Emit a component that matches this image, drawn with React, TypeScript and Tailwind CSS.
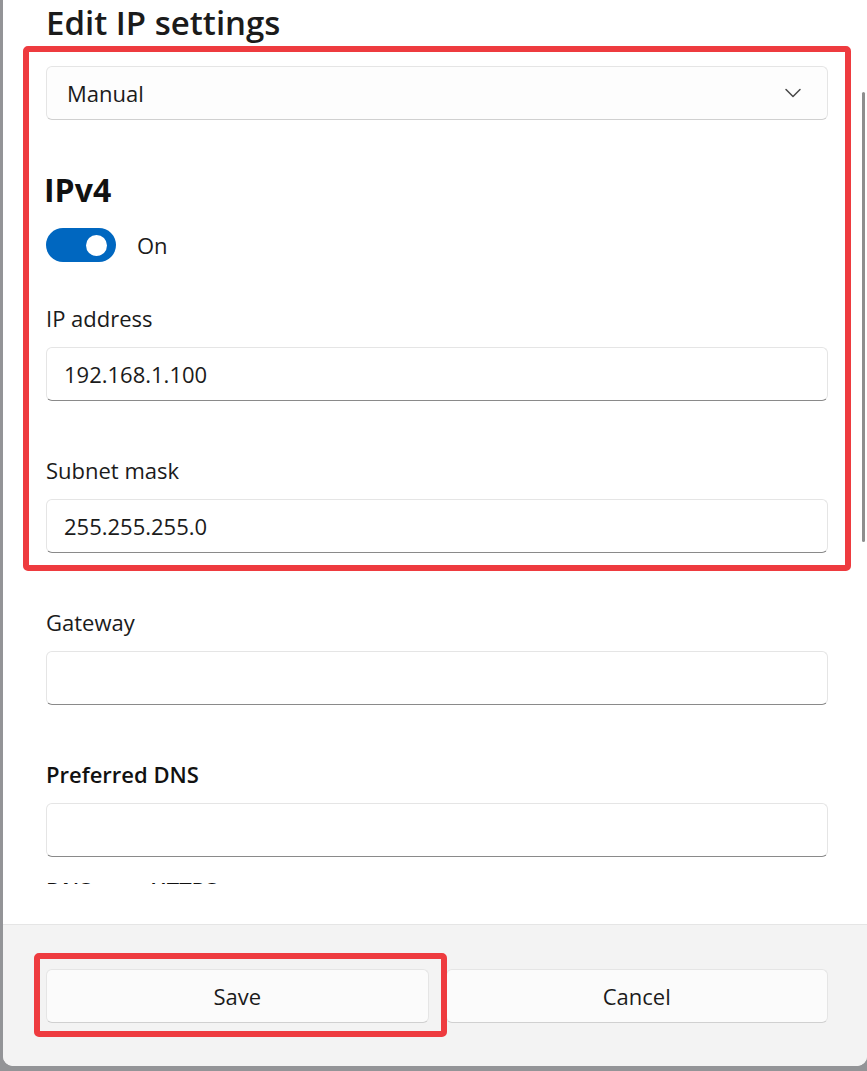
import { ChevronDown } from 'lucide-react';

const font = { fontFamily: '"Open Sans", "Noto Sans", sans-serif' };

function Field({ label, value, strong }: { label: string; value?: string; strong?: boolean }) {
  return (
    <div className="flex flex-col">
      <div className={`text-[22px] leading-[28px] ${strong ? 'font-semibold text-[#111]' : 'text-[#1b1b1b]'}`}>{label}</div>
      <div className="mt-[15px] h-[54px] rounded-[6px] border border-[#e5e5e5] border-b-[#8a8a8a] bg-white px-[17px] flex items-center text-[22px] text-[#1b1b1b]">
        {value}
      </div>
    </div>
  );
}

export default function App() {
  return (
    <div className="relative w-[867px] h-[1071px] bg-[#939497] pl-[3px] pb-[5px] overflow-hidden" style={font}>
      <div className="w-full h-full bg-white rounded-b-[10px] overflow-hidden flex flex-col">
        {/* scrolling content */}
        <div className="h-[884px] overflow-hidden pl-[43px] pr-[39px] pt-[3px]">
          <h1 className="text-[33px] leading-[40px] font-semibold text-[#1b1b1b]">Edit IP settings</h1>

          <div className="mt-[23px] h-[54px] rounded-[6px] border border-[#e5e5e5] border-b-[#d0d0d0] bg-[#fdfdfd] pl-[20px] pr-[20px] flex items-center justify-between text-[22px] text-[#1b1b1b]">
            <span>Manual</span>
            <ChevronDown className="w-[28px] h-[28px] text-[#4a4a4a]" strokeWidth={1.3} />
          </div>

          <h2 className="mt-[50px] text-[32px] leading-[40px] font-bold text-[#111] -ml-[2px]">IPv4</h2>

          <div className="mt-[18px] flex items-center gap-[21px]">
            <div className="w-[70px] h-[34px] rounded-full bg-[#0067c0] flex items-center justify-end pr-[9px]">
              <div className="w-[21px] h-[21px] rounded-full bg-white" />
            </div>
            <span className="text-[22px] text-[#1b1b1b]">On</span>
          </div>

          <div className="mt-[42px] flex flex-col gap-[55px]">
            <Field label="IP address" value="192.168.1.100" />
            <Field label="Subnet mask" value="255.255.255.0" />
            <Field label="Gateway" />
            <Field label="Preferred DNS" strong />
          </div>

          <div className="mt-[19px] text-[22px] leading-[28px] font-semibold text-[#111]">DNS over HTTPS</div>
        </div>

        <div className="h-[40px]" />

        {/* footer */}
        <div className="flex-1 border-t border-[#e5e5e5] bg-[#f3f3f3] pl-[43px] pr-[39px] pt-[44px]">
          <div className="grid grid-cols-2 gap-[17px]">
            <button className="h-[54px] rounded-[6px] border border-[#e5e5e5] border-b-[#d0d0d0] bg-[#fbfbfb] text-[22px] text-[#1b1b1b]">Save</button>
            <button className="h-[54px] rounded-[6px] border border-[#e5e5e5] border-b-[#d0d0d0] bg-[#fbfbfb] text-[22px] text-[#1b1b1b]">Cancel</button>
          </div>
        </div>
      </div>

      {/* scrollbar */}
      <div className="absolute left-[862px] top-[92px] w-[3px] h-[450px] rounded-full bg-[#8e8e8e]" />

      {/* annotation boxes */}
      <div className="absolute left-[23px] top-[46px] w-[828px] h-[525px] border-[6px] border-[#ee3b3f] rounded-[5px]" />
      <div className="absolute left-[34px] top-[953px] w-[413px] h-[84px] border-[6px] border-[#ee3b3f] rounded-[5px]" />
    </div>
  );
}
